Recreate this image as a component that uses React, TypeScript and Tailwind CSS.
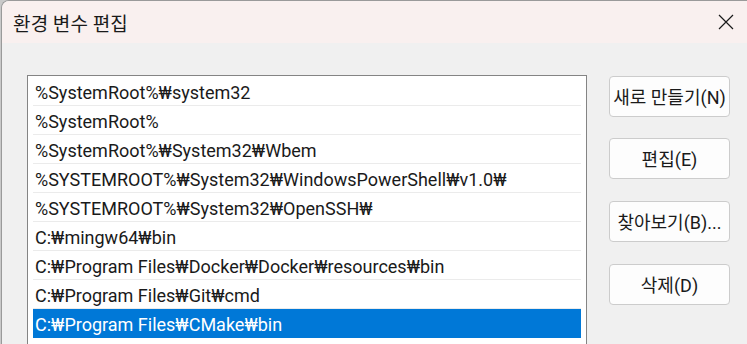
import { ReactNode } from "react";

const paths = [
	"%SystemRoot%₩system32",
	"%SystemRoot%",
	"%SystemRoot%₩System32₩Wbem",
	"%SYSTEMROOT%₩System32₩WindowsPowerShell₩v1.0₩",
	"%SYSTEMROOT%₩System32₩OpenSSH₩",
	"C:₩mingw64₩bin",
	"C:₩Program Files₩Docker₩Docker₩resources₩bin",
	"C:₩Program Files₩Git₩cmd",
	"C:₩Program Files₩CMake₩bin",
];

const selected = 8;

function Button({ className = "", children }: { className?: string, children: ReactNode }) {
	return <button className={`h-[41px] w-[121px] rounded-[4px] border border-[#cccccc] bg-[#fdfdfd] pt-[2px] text-[18px] text-[#1a1a1a] leading-none whitespace-nowrap ${className}`}>
		{children}
	</button>
}

export default function App() {
	return <div
		className="w-[747px] h-[344px] overflow-hidden bg-[#c9c9c9]"
		style={{ fontFamily: "Roboto, 'Noto Sans', 'Noto Sans CJK KR', sans-serif" }}
	>
		<div className="ml-px h-full bg-[#f0f0f0] border-t border-l border-[#9a9a9a] rounded-tl-[8px] overflow-hidden">
			{/* title bar */}
			<div className="h-[42px] bg-[#f9f0ef] flex items-center justify-between pl-[11px] pr-[13px]">
				<span className="mt-[2px] text-[19px] text-[#1a1a1a] tracking-[0.2px]" style={{ fontFamily: "'Noto Sans CJK KR', sans-serif" }}>환경 변수 편집</span>
				<svg width="16" height="16" viewBox="0 0 16 16" className="text-[#1a1a1a]">
					<path d="M1 1 L15 15 M15 1 L1 15" stroke="currentColor" strokeWidth="1.2" />
				</svg>
			</div>

			{/* body */}
			<div className="flex pl-[25px] pt-[32px]">
				<div className="w-[560px] h-[300px] border border-[#848484] bg-white pt-px px-[5px]">
					{paths.map((p, i) => (
						<div
							key={i}
							className={`h-[29px] border-b pl-[2px] pt-[2px] leading-[28px] text-[18px] whitespace-nowrap ${i == selected ? "bg-[#0078d7] text-white border-[#0078d7]" : "text-[#1a1a1a] border-[#ebebeb]"}`}
						>
							{p}
						</div>
					))}
				</div>

				<div className="flex flex-col ml-[22px] pt-px">
					<Button>새로 만들기(N)</Button>
					<Button className="mt-[21px]">편집(E)</Button>
					<Button className="mt-[22px]">찾아보기(B)...</Button>
					<Button className="mt-[22px]">삭제(D)</Button>
				</div>
			</div>
		</div>
	</div>
}
